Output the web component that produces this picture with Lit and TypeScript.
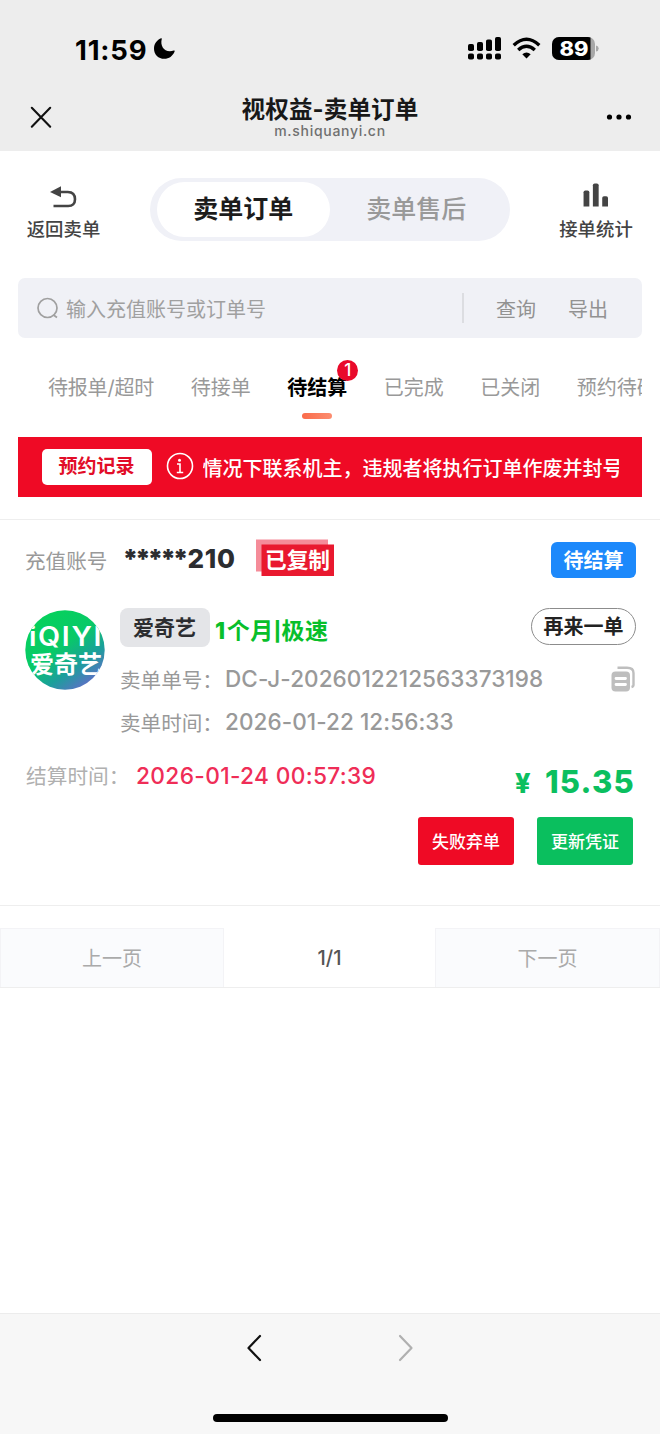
import { LitElement, html, css } from "lit";
import { customElement } from "lit/decorators.js";

const TABS = ["待报单/超时", "待接单", "待结算", "已完成", "已关闭", "预约待确认"];

@customElement("top-bar")
class TopBar extends LitElement {
  static styles = css`
    :host { display: block; height: 151px; background: #ededed; color: #000; }
    .status { display: flex; align-items: center; height: 98px; padding: 0 61px 0 75px; }
    .time { font-size: 27.500px; font-weight: 700; line-height: 40px; letter-spacing: 0.8px; padding-top: 2px; width: 73px; white-space: nowrap; }
    .moon { margin-left: 5px; }
    .signals { display: flex; margin-left: auto; }
    svg { display: block; }
    .battery { font: 800 19.500px Inter, sans-serif; }
    .nav { display: flex; align-items: flex-start; justify-content: space-between; padding: 0 28px 0 30px; height: 53px; }
    .close { margin-top: 8px; }
    .more { margin-top: 15px; }
    .names { text-align: center; margin-left: 2px; }
    .title { font-size: 23.6px; line-height: 26px; font-weight: 700; color: #181818; margin-top: -1px; letter-spacing: 0.1px; }
    .url { font-size: 14px; line-height: 16px; font-weight: 500; color: #707070; letter-spacing: 0.7px; }
  `;
  render() {
    return html`
      <div class="status">
        <span class="time">11:59</span>
        <svg class="moon" width="22" height="22" viewBox="0 0 22 22"><path d="M8.8 .8C6.7 8.5 12 15.500 20.800 12.600C21.400 12.400 21.900 12.800 21.600 13.500C19.700 18.200 16 20.800 11.300 20.800C5.300 20.800 1 16.500 1 10.700C1 6 3.600 2.200 8 .3C8.500 .1 9 .3 8.800 .8Z"/></svg>
        <div class="signals">
          <svg width="131" height="26" viewBox="0 0 131 26">
            <g><rect x="0" y="8" width="6" height="7" rx="1.800"/><rect x="9" y="6" width="6" height="9" rx="1.800"/><rect x="18" y="3.500" width="6" height="11.500" rx="1.800"/><rect x="27" y="1" width="6" height="14" rx="1.800"/>
            <rect x="0" y="17.500" width="6" height="6" rx="1.800"/><rect x="9" y="17.500" width="6" height="6" rx="1.800"/><rect x="18" y="17.500" width="6" height="6" rx="1.800"/><rect x="27" y="17.500" width="6" height="6" rx="1.800"/></g>
            <g fill="none" stroke="#000" stroke-width="3.400"><path d="M45.700 9.200Q58.500-2.800 71.300 9.200"/><path d="M50.200 14Q58.500 6.600 66.800 14"/></g>
            <path d="M54.300 18.200Q58.500 14.800 62.700 18.200L58.500 22.500Z"/>
            <clipPath id="cell"><rect x="84" y="1" width="43" height="23" rx="7"/></clipPath>
            <g clip-path="url(#cell)"><rect x="84" y="1" width="43" height="23" fill="#a8a8a8"/><rect x="84" y="1" width="38.500" height="23"/></g>
            <path d="M128 9.500Q130.700 10 130.700 12.500T128 15.500Z" fill="#a8a8a8"/>
            <text class="battery" x="91.500" y="19.600" textLength="29" lengthAdjust="spacingAndGlyphs" fill="#fff">89</text>
          </svg>
        </div>
      </div>
      <div class="nav">
        <svg class="close" width="22" height="23" viewBox="0 0 22 23"><path d="M1.800 1.800L20.200 20.700M20.200 1.800L1.800 20.700" stroke="#111" stroke-width="2.100" stroke-linecap="round"/></svg>
        <div class="names"><div class="title">视权益-卖单订单</div><div class="url">m.shiquanyi.cn</div></div>
        <svg class="more" width="26" height="8" viewBox="0 0 26 8"><circle cx="3.500" cy="4" r="2.600"/><circle cx="13" cy="4" r="2.600"/><circle cx="22.500" cy="4" r="2.600"/></svg>
      </div>`;
  }
}

@customElement("order-card")
class OrderCard extends LitElement {
  static styles = css`
    :host { display: block; height: 387px; box-sizing: border-box; border-top: 1px solid #eee; border-bottom: 1px solid #eee; padding: 20px 24px 0 25px; }
    svg { display: block; }
    .row { display: flex; align-items: center; }
    .account { height: 40px; }
    .label { font-size: 20.600px; color: #999; white-space: nowrap; }
    .masked { font-size: 26px; font-weight: 800; color: #2c2d30; margin: -2px 0 0 15px; width: 134px; white-space: nowrap; }
    .stars { letter-spacing: -3.200px; font-weight: 900; }
    .digits { margin-left: 2px; letter-spacing: .7px; }
    .state { margin-left: auto; width: 85px; height: 36px; line-height: 38px; border-radius: 6px; background: #1d89fb; color: #fff; text-align: center; font-size: 20px; font-weight: 700; }
    .copied { margin-top: -3px; }
    .stamp { font: 700 22px "Noto Sans CJK SC", sans-serif; }
    .body { display: flex; margin-top: 28px; }
    .logo { margin: 2px 15px 0 0; flex: none; }
    .logo-latin { font: 600 26.500px Inter, sans-serif; letter-spacing: 1.500px; }
    .logo-cn { font: 700 24px "Noto Sans CJK SC", sans-serif; }
    .details { flex: 1; }
    .goods { height: 39px; }
    .tag { width: 90px; height: 39px; line-height: 40px; border-radius: 8px; background: #e4e5e8; text-align: center; font-size: 21px; font-weight: 700; color: #2c2d30; text-indent: -1px; }
    .plan { margin: 4px 0 0 5px; font-size: 23px; font-weight: 700; color: #08bf2b; letter-spacing: .5px; }
    .one { font-weight: 800; margin-right: 1px; }
    .bar { font-size: 19px; font-weight: 800; position: relative; top: -1px; }
    .again { margin-left: auto; box-sizing: border-box; width: 105px; height: 37px; line-height: 37px; border: 1.500px solid #8c8c8c; border-radius: 19px; text-align: center; font-size: 20px; font-weight: 700; color: #222; margin-top: -2px; }
    .meta { height: 43px; color: #999; padding-left: 0; }
    .first { margin-top: 10px; }
    .value { font-size: 22.500px; font-weight: 500; margin: 1px 0 0 2px; white-space: nowrap; letter-spacing: .07px; }
    .meta .label { width: 103px; margin-top: 1px; }
    .copy { margin-left: auto; margin-top: 2px; }
    .settle { height: 40px; margin-top: 12px; padding-left: 1px; }
    .settle .label { color: #b0b0b0; width: 110px; font-size: 20.700px; }
    .date { color: #ef2d57; font-size: 22.700px; font-weight: 500; letter-spacing: .35px; margin-top: 1px; }
    .price { display: flex; align-items: baseline; margin-left: auto; padding-right: 1px; margin-top: 13px; color: #0bbf5f; font-size: 31px; font-weight: 800; gap: 13px; letter-spacing: 1.200px; }
    .yen { font-size: 27px; }
    .actions { display: flex; justify-content: flex-end; gap: 23px; padding-right: 3px; margin-top: 22px; }
    .action { width: 96px; height: 48px; line-height: 50px; border-radius: 3px; text-align: center; color: #fff; font-size: 17px; font-weight: 500; background: #ef0a25; }
    .confirm { background: #0abf5e; }
  `;
  render() {
    return html`
      <div class="row account">
        <span class="label">充值账号</span><span class="masked"><span class="stars">*****</span><span class="digits">210</span></span>
        <svg class="copied" width="78" height="38" viewBox="0 0 78 38"><rect width="72" height="32" y="0.500" fill="#f58c99"/><rect x="5.500" y="5.500" width="72.500" height="31.500" fill="#e9192f"/><text class="stamp" x="9" y="29" textLength="65" lengthAdjust="spacingAndGlyphs" fill="#fff">已复制</text></svg>
        <span class="state">待结算</span>
      </div>
      <div class="body">
        <svg class="logo" width="80" height="80" viewBox="0 0 80 80">
          <defs><linearGradient id="brand" x1=".25" y1=".05" x2=".9" y2=".95"><stop offset="0" stop-color="#06d15c"/><stop offset=".4" stop-color="#08c968"/><stop offset=".68" stop-color="#1b9f9b"/><stop offset="1" stop-color="#6f63d2"/></linearGradient><clipPath id="disc"><circle cx="40" cy="40" r="39.700"/></clipPath></defs>
          <g clip-path="url(#disc)"><rect width="80" height="80" fill="url(#brand)"/><text class="logo-latin" x="4" y="36" textLength="74" lengthAdjust="spacingAndGlyphs" fill="#fff">iQIYI</text><text class="logo-cn" x="5" y="63" textLength="72" fill="#fff">爱奇艺</text></g>
        </svg>
        <div class="details">
          <div class="row goods"><span class="tag">爱奇艺</span><span class="plan"><span class="one">1</span>个月<span class="bar">|</span>极速</span><span class="again">再来一单</span></div>
          <div class="row meta first"><span class="label">卖单单号：</span><span class="value">DC-J-2026012212563373198</span>
            <svg class="copy" width="26" height="26" viewBox="0 0 26 26"><path d="M7.500 1.800H17Q23.500 1.800 23.500 7V19Q23.500 20.500 21.500 21" fill="none" stroke="#bebebe" stroke-width="2.400"/><rect x="1.500" y="5.500" width="18.500" height="20" rx="4" fill="#bebebe"/><path d="M6 12.500H15.500M6 18.500H15.500" stroke="#fff" stroke-width="2.800" stroke-linecap="round"/></svg>
          </div>
          <div class="row meta"><span class="label">卖单时间：</span><span class="value">2026-01-22 12:56:33</span></div>
        </div>
      </div>
      <div class="row settle"><span class="label">结算时间：</span><span class="date">2026-01-24 00:57:39</span><span class="price"><span class="yen">¥</span><span>15.35</span></span></div>
      <div class="actions"><span class="action">失败弃单</span><span class="action confirm">更新凭证</span></div>`;
  }
}

@customElement("app-root")
class AppRoot extends LitElement {
  static styles = css`
    :host { display: flex; flex-direction: column; width: 660px; height: 1434px; overflow: hidden; background: #fff; font-family: Inter, "Noto Sans CJK SC", sans-serif; }
    svg { display: block; }
    .head { display: flex; justify-content: space-between; padding: 27px 27px 0 26.500px; height: 63px; }
    .shortcut { display: flex; flex-direction: column; align-items: center; width: 74px; font-size: 18.400px; line-height: 24px; color: #444; font-weight: 500; }
    .back { margin: 8px 0 9px; }
    .chart { margin: 5px 0 10px; }
    .segments { display: flex; box-sizing: border-box; width: 360px; height: 63px; padding: 4px 7px; border-radius: 32px; background: #f0f1f7; font-size: 25px; line-height: 55px; text-align: center; color: #999; }
    .segment { width: 173px; height: 55px; border-radius: 28px; font-weight: 500; }
    .chosen { background: #fff; color: #1c1c1c; font-weight: 700; }
    .search { display: flex; align-items: center; height: 60px; margin: 37px 18px 0; border-radius: 7px; background: #f0f1f6; font-size: 20px; color: #a0a0a0; }
    .lens { margin: 0 7px 0 18px; }
    .hint { width: 396px; }
    .divider { width: 1.500px; height: 30px; background: #dcdde1; margin-right: 32.500px; }
    .query { margin-right: 32px; }
    .link { color: #929292; }
    .tabs { display: flex; gap: 36.500px; margin: 9px 18px 0; padding: 0 0 0 29.900px; height: 90px; overflow: hidden; font-size: 20px; color: #999; white-space: nowrap; box-sizing: border-box; }
    .tab { position: relative; line-height: 26px; padding-top: 28px; flex: none; }
    .tab:first-child { letter-spacing: -.15px; }
    .current { color: #000; font-weight: 700; }
    .current::after { content: ""; display: block; width: 30px; height: 6px; margin: 12px auto 0; border-radius: 3px; background: linear-gradient(90deg, #fa6b4a, #fc8d70); }
    .count { position: absolute; right: -11px; top: 13px; width: 21px; height: 21px; border-radius: 50%; background: #e90a2b; color: #fff; font-size: 17px; font-weight: 500; line-height: 21px; text-align: center; }
    .notice { display: flex; align-items: center; height: 60px; margin: -0.500px 18px 0; background: #ef0a25; color: #fff; padding: 0 23px 0 24px; box-sizing: border-box; }
    .records { flex: none; width: 110px; height: 36px; line-height: 36px; border-radius: 5px; background: #fff; color: #e20d28; text-align: center; font-size: 19px; font-weight: 700; text-indent: -1px; }
    .info { flex: none; margin: -1px 9px 0 13.500px; }
    .marquee { overflow: hidden; white-space: nowrap; font-size: 20px; font-weight: 500; padding-top: 1px; }
    .card { margin-top: 22px; }
    .pager { display: grid; grid-template-columns: 224px 1fr 225px; height: 60px; margin-top: 22px; box-sizing: border-box; border-bottom: 1px solid #eee; text-align: center; line-height: 61px; font-size: 20px; color: #aaa; }
    .turn { background: #fafbfd; border: 1px solid #f3f3f6; border-bottom: 0; box-sizing: border-box; height: 59px; }
    .page { color: #555; font-weight: 500; }
    .browser { display: flex; flex-direction: column; align-items: center; box-sizing: border-box; height: 121px; margin-top: auto; background: #f7f7f7; border-top: 1px solid #ececec; }
    .arrows { display: flex; gap: 136px; margin-top: 20px; }
    .home { width: 235px; height: 8px; border-radius: 4px; background: #000; margin-top: 52px; }
  `;
  render() {
    return html`
      <top-bar></top-bar>
      <div class="head">
        <div class="shortcut"><svg class="back" width="27" height="22" viewBox="0 0 27 22"><path d="M10.500 6H17.800Q25 6.200 25 13.200T17.800 20H3.500" fill="none" stroke="#444" stroke-width="2.600"/><path d="M0 6L11 .3V11.300Z" fill="#444"/></svg>返回卖单</div>
        <div class="segments"><span class="segment chosen">卖单订单</span><span class="segment">卖单售后</span></div>
        <div class="shortcut"><svg class="chart" width="28" height="27" viewBox="0 0 28 27"><g fill="#444"><path d="M0 26.500V10.500Q0 8.500 2 8.500H4.500Q6.500 8.500 6.500 10.500V26.500Z"/><path d="M10.500 26.500V2.500Q10.500 .5 12.500 .5H15Q17 .5 17 2.500V26.500Z"/><path d="M21 26.500V17Q21 15 23 15H25.500Q27.500 15 27.500 17V26.500Z"/></g></svg>接单统计</div>
      </div>
      <div class="search">
        <svg class="lens" width="23" height="23" viewBox="0 0 23 23" fill="none" stroke="#a0a0a0" stroke-width="1.700"><circle cx="11.500" cy="11" r="9.500"/><path d="M17.500 18L21 20.500"/></svg>
        <span class="hint">输入充值账号或订单号</span><span class="divider"></span><span class="link query">查询</span><span class="link">导出</span>
      </div>
      <div class="tabs">${TABS.map((name, i) => html`<span class="tab ${i === 2 ? "current" : ""}">${name}${i === 2 ? html`<span class="count">1</span>` : ""}</span>`)}</div>
      <div class="notice">
        <span class="records">预约记录</span>
        <svg class="info" width="28" height="28" viewBox="0 0 28 28" fill="none" stroke="#fff" stroke-width="1.600"><circle cx="14" cy="14" r="12.500"/><circle cx="13.500" cy="8.300" r="1.500" fill="#fff" stroke="none"/><path d="M11 12H14V20.500M10.800 20.500H17.200"/></svg>
        <span class="marquee">情况下联系机主，违规者将执行订单作废并封号</span>
      </div>
      <order-card class="card"></order-card>
      <div class="pager"><span class="turn">上一页</span><span class="page">1/1</span><span class="turn">下一页</span></div>
      <div class="browser">
        <div class="arrows">
          <svg width="16" height="28" viewBox="0 0 16 28" fill="none" stroke="#111" stroke-width="2.200" stroke-linecap="round" stroke-linejoin="round"><path d="M14 2L2.500 14L14 26"/></svg>
          <svg width="16" height="28" viewBox="0 0 16 28" fill="none" stroke="#b0b0b0" stroke-width="2.200" stroke-linecap="round" stroke-linejoin="round"><path d="M2 2L13.500 14L2 26"/></svg>
        </div>
        <div class="home"></div>
      </div>`;
  }
}
